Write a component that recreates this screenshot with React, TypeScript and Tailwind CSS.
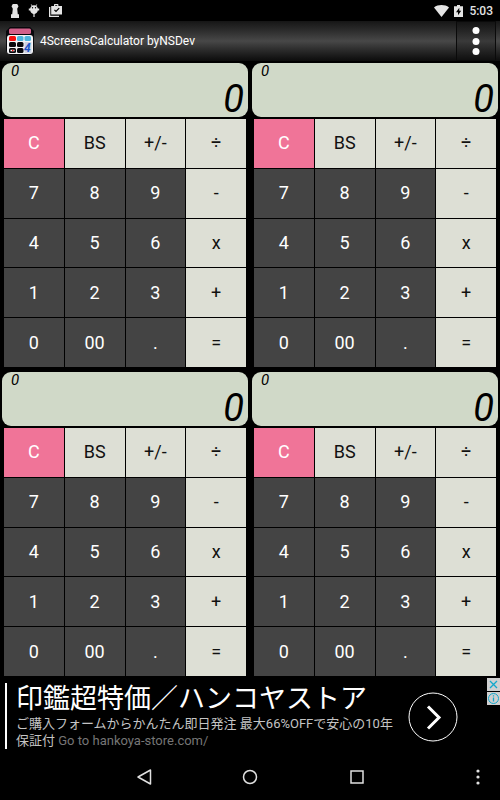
const KEYS = [
  ["C", "BS", "+/-", "÷"],
  ["7", "8", "9", "-"],
  ["4", "5", "6", "x"],
  ["1", "2", "3", "+"],
  ["0", "00", ".", "="],
];

const SCREENS = [1, 2, 3, 4];

function keyStyle(row: number, col: number) {
  if (row === 0 && col === 0) return "bg-[#f07498] text-white";
  if (row === 0 || col === 3) return "bg-[#dddfd5] text-[#111111]";
  return "bg-[#444444] text-white";
}

function StatusBar() {
  return (
    <div className="flex h-[21px] items-center justify-between pr-[7px] pl-[10px]">
      <div className="flex items-center gap-[7px] text-[#e4e4e4]">
        <svg width="10" height="14" viewBox="0 0 10 14" fill="currentColor">
          <path d="M2.8 0h4.400l1.300 2.200-1.300 2.600.6 5.400H9V14H1v-3.800h1.200l.6-5.400L1.500 2.200z" />
        </svg>
        <svg width="12" height="14" viewBox="0 0 12 14" fill="currentColor" className="ml-[1px]">
          <path d="M3.2.2l1.2 1.4a4 4 0 0 1 3.2 0L8.8.2l.5.4-1 1.4a3.6 3.6 0 0 1 1.500 2.400h1.400v2.200H9.800C9.600 8.600 8.200 9.800 6.600 9.900V13H5.400V9.900C3.800 9.800 2.400 8.600 2.200 6.600H.8V4.400h1.400A3.600 3.600 0 0 1 3.700 2L2.700.6z" />
          <circle cx="4.5" cy="3.8" r=".7" fill="#000" />
          <circle cx="7.5" cy="3.8" r=".7" fill="#000" />
        </svg>
        <svg width="13" height="13" viewBox="0 0 13 13" fill="currentColor" className="ml-[2px]">
          <path d="M0 3h1.3v8.7H10V13H0z" />
          <path
            fillRule="evenodd"
            d="M5 2V.6L5.6 0h3.2l.6.6V2H13v8.6H2.2V2zm1.2 0h2V1.2h-2zM5 6.2l2 2 3.6-3.6-.8-.8L7 6.6 5.8 5.4z"
          />
        </svg>
      </div>
      <div className="flex items-center text-[#e4e4e4]">
        <svg width="15" height="12" viewBox="0 0 15 12" fill="currentColor">
          <path d="M7.5 12L0 2.5C4-.7 11-.7 15 2.5z" />
        </svg>
        <svg width="9" height="12" viewBox="0 0 9 12" fill="currentColor" className="ml-[5px]">
          <path fillRule="evenodd" d="M3 0h3v1.3h3V12H0V1.3h3zm2.3 2.8L2 7.2h2v3l3.200-4.400H5.300z" />
        </svg>
        <span className="ml-[6px] text-xs font-medium">5:03</span>
      </div>
    </div>
  );
}

function AppIcon() {
  return (
    <svg width="28" height="28" viewBox="0 0 28 28">
      <path d="M4 0h20l4 4v20l-4 4H4l-4-4V4z" fill="#08080c" />
      <rect x="1" y="8" width="26" height="19" rx="3" fill="#f4f4f6" />
      <rect x="3" y="1.5" width="22" height="5.5" rx="1.5" fill="#d3608a" />
      <rect x="3" y="9" width="7" height="5" rx="1.5" fill="#f51010" />
      <rect x="11" y="9" width="6.5" height="5" rx="1.5" fill="#4fb4dc" />
      <rect x="18.5" y="9" width="6.5" height="5" rx="1.5" fill="#4fb4dc" />
      <rect x="3" y="15" width="7" height="5" rx="1.5" fill="#08080c" />
      <rect x="11" y="15" width="6.5" height="5" rx="1.5" fill="#08080c" />
      <rect x="3" y="21" width="7" height="5" rx="1.5" fill="#08080c" />
      <rect x="11" y="21" width="6.5" height="5" rx="1.5" fill="#08080c" />
      <path d="M4.5 23.500h4" stroke="#fff" strokeWidth="1.5" />
      <path d="M6 23.500h1.500" stroke="#f51010" strokeWidth="1.5" />
      <rect x="18.500" y="15" width="7" height="11" fill="#cdd3e2" />
      <text x="18" y="25" fontFamily="Roboto, sans-serif" fontSize="12" fontWeight="700" fontStyle="italic" fill="#1c55c8">
        4
      </text>
    </svg>
  );
}

function TitleBar() {
  return (
    <header className="flex h-10 items-center bg-linear-to-b from-[#161616] via-[#484848] to-[#0c0c0c] pr-1 pl-[6px]">
      <AppIcon />
      <h1 className="ml-[6px] flex-1 text-xs text-white">4ScreensCalculator byNSDev</h1>
      <button
        aria-label="More options"
        className="flex h-10 w-10 items-center justify-center border border-[#0a0a0a] bg-linear-to-b from-[#141414] via-[#3a3a3a] to-[#101010]"
      >
        <svg width="8" height="30" viewBox="0 0 8 30" fill="#fff">
          <circle cx="4" cy="4.5" r="3.5" />
          <circle cx="4" cy="15.5" r="3.5" />
          <circle cx="4" cy="25.5" r="3.5" />
        </svg>
      </button>
    </header>
  );
}

function Calculator() {
  return (
    <section>
      <div className="flex h-[54px] justify-between rounded-[9px] bg-[#d0d9c8] pr-1 pl-[9px] text-black italic">
        <output className="text-[15px] leading-4">0</output>
        <output className="self-end text-[38px] leading-9">0</output>
      </div>
      <div className="mx-0.5 mt-0.5 grid h-62 grid-cols-4 grid-rows-5 gap-px">
        {KEYS.map((row, r) =>
          row.map((key, c) => (
            <button key={key} className={`text-lg ${keyStyle(r, c)}`}>
              {key}
            </button>
          ))
        )}
      </div>
    </section>
  );
}

function AdBanner() {
  return (
    <aside className="relative flex h-[77px] items-start pt-[7px] pl-[5px]">
      <a href="#" className="flex flex-1 items-start">
        <div className="h-[66px] border-l-2 border-white pl-[9px]">
          <p className="text-[27px] leading-8 whitespace-nowrap text-white">印鑑超特価／ハンコヤストア</p>
          <p className="w-[392px] text-[13px] leading-[17px] text-[#c4c4c4]">
            ご購入フォームからかんたん即日発注 最大66%OFFで安心の10年
            <br />
            保証付 <span className="text-[#767676]">Go to hankoya-store.com/</span>
          </p>
        </div>
        <svg width="50" height="50" viewBox="0 0 50 50" fill="none" stroke="#fff" className="mt-[9px]">
          <circle cx="25" cy="25" r="24" strokeWidth="1" />
          <path d="M20 14.5L31 25.5 20 36.5" strokeWidth="3" />
        </svg>
      </a>
      <div className="absolute top-[2px] right-0 flex flex-col gap-px">
        <button aria-label="Close ad" className="h-[13px] w-[13px] bg-[#d0d0d0]">
          <svg width="13" height="13" viewBox="0 0 13 13" stroke="#12a8cc" strokeWidth="1.3">
            <path d="M3 3l7 7M10 3l-7 7" />
          </svg>
        </button>
        <button aria-label="Ad info" className="h-[13px] w-[13px] bg-[#d0d0d0]">
          <svg width="13" height="13" viewBox="0 0 13 13" fill="none" stroke="#12a8cc" strokeWidth="1">
            <circle cx="6.5" cy="6.5" r="5" />
            <path d="M6.5 5.5v4M6.5 3.2v1.3" strokeWidth="1.3" />
          </svg>
        </button>
      </div>
    </aside>
  );
}

function NavBar() {
  return (
    <nav className="grid h-[47px] grid-cols-[1fr_98px_32px_98px_1fr] items-center text-[#e0e0e0]">
      <span />
      <button aria-label="Back" className="justify-self-start">
        <svg width="16" height="18" viewBox="0 0 16 18" fill="none" stroke="currentColor" strokeWidth="1.5">
          <path d="M14.5 2v14L2 9z" strokeLinejoin="round" />
        </svg>
      </button>
      <button aria-label="Home" className="justify-self-center">
        <svg width="16" height="16" viewBox="0 0 16 16" fill="none" stroke="currentColor" strokeWidth="1.5">
          <circle cx="8" cy="8" r="6.5" />
        </svg>
      </button>
      <button aria-label="Recent apps" className="justify-self-end">
        <svg width="14" height="14" viewBox="0 0 14 14" fill="none" stroke="currentColor" strokeWidth="1.5">
          <rect x="1" y="1" width="12" height="12" />
        </svg>
      </button>
      <button aria-label="Menu" className="mr-5 justify-self-end">
        <svg width="4" height="16" viewBox="0 0 4 16" fill="currentColor">
          <circle cx="2" cy="2" r="1.6" />
          <circle cx="2" cy="8" r="1.6" />
          <circle cx="2" cy="14" r="1.6" />
        </svg>
      </button>
    </nav>
  );
}

export default function App() {
  return (
    <div className="min-h-screen bg-black font-[Roboto,'Noto_Sans_CJK_JP',sans-serif]">
      <StatusBar />
      <TitleBar />
      <main className="grid grid-cols-2 gap-x-1 gap-y-[5px] px-0.5 pt-0.5">
        {SCREENS.map((n) => (
          <Calculator key={n} />
        ))}
      </main>
      <AdBanner />
      <NavBar />
    </div>
  );
}
